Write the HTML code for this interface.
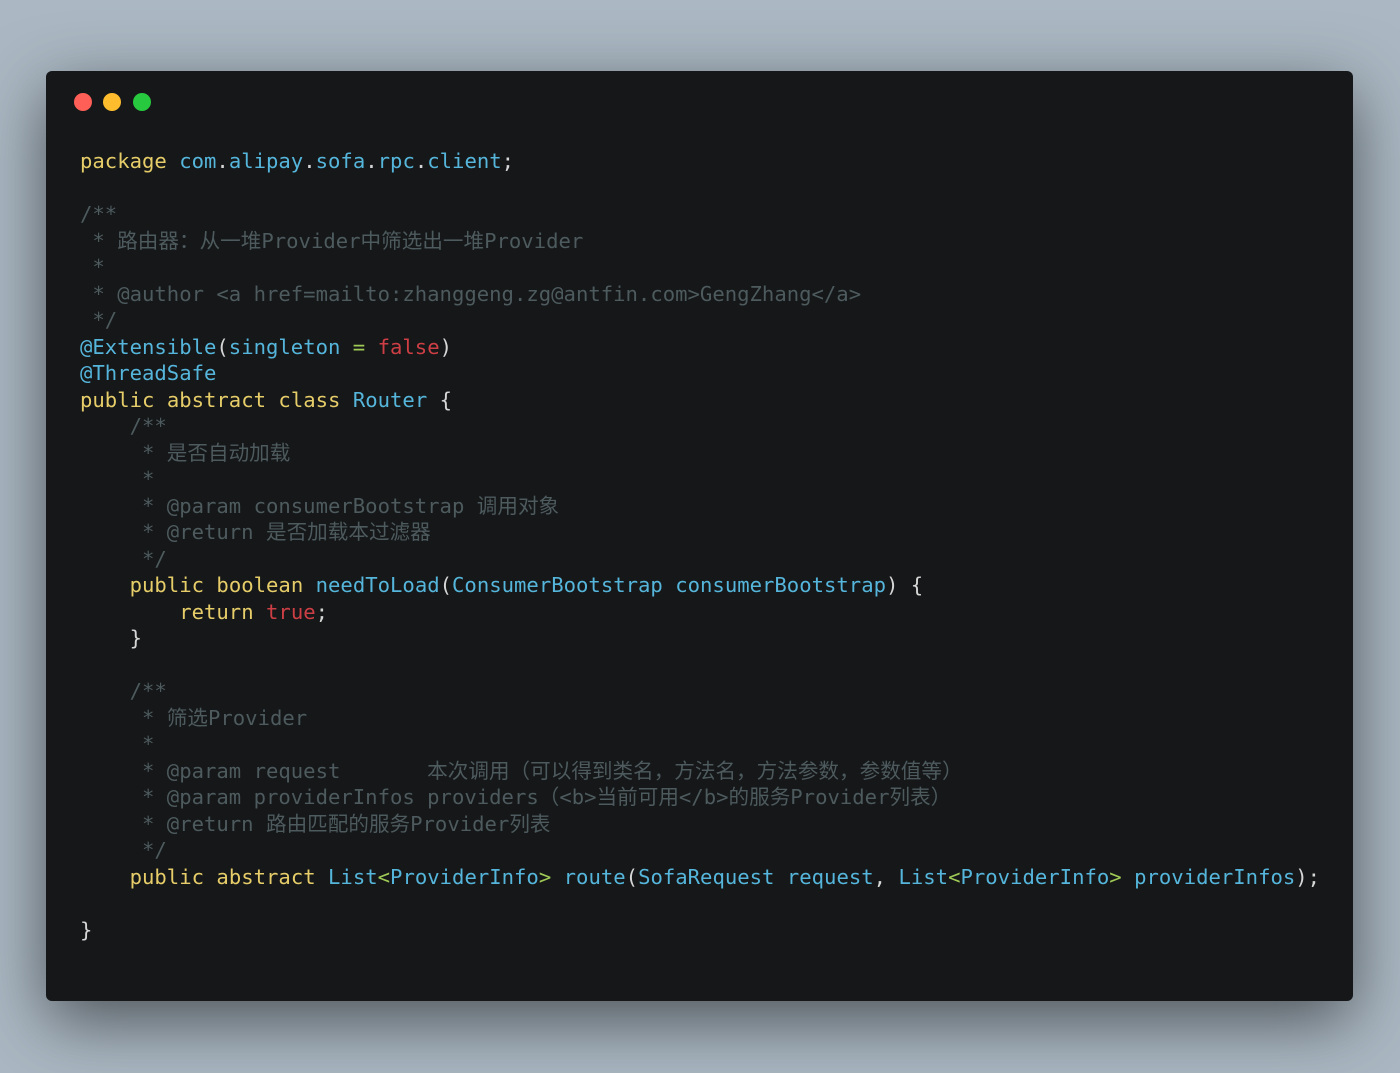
<!DOCTYPE html>
<html><head><meta charset="utf-8"><style>
html,body{margin:0;padding:0;}
body{width:1400px;height:1073px;background:#abb8c3;position:relative;overflow:hidden;}
.win{position:absolute;left:46px;top:71px;width:1307px;height:930px;background:#151718;border-radius:6px;box-shadow:0 20px 68px rgba(0,0,0,0.55);}
.dot{position:absolute;top:22px;width:18px;height:18px;border-radius:50%;}
pre{position:absolute;left:34px;top:77px;margin:0;font-family:"DejaVu Sans Mono","Liberation Mono","Noto Sans CJK SC",monospace;font-size:20.6px;line-height:26.5px;color:#d6d6d6;}
.k{color:#e6cd69}.b{color:#55b5db}.c{color:#4d5a5e}.r{color:#cd3f45}.g{color:#9fca56}
</style></head><body>
<div class="win">
<div class="dot" style="left:28px;background:#ff5f56"></div>
<div class="dot" style="left:57px;background:#ffbd2e"></div>
<div class="dot" style="left:87px;background:#27c93f"></div>
<pre><span class="k">package</span> <span class="b">com</span>.<span class="b">alipay</span>.<span class="b">sofa</span>.<span class="b">rpc</span>.<span class="b">client</span>;

<span class="c">/**
 * 路由器：从一堆Provider中筛选出一堆Provider
 *
 * @author &lt;a href=mailto:zhanggeng.zg@antfin.com&gt;GengZhang&lt;/a&gt;
 */</span>
<span class="b">@Extensible</span>(<span class="b">singleton</span> <span class="g">=</span> <span class="r">false</span>)
<span class="b">@ThreadSafe</span>
<span class="k">public</span> <span class="k">abstract</span> <span class="k">class</span> <span class="b">Router</span> {
    <span class="c">/**
     * 是否自动加载
     *
     * @param consumerBootstrap 调用对象
     * @return 是否加载本过滤器
     */</span>
    <span class="k">public</span> <span class="k">boolean</span> <span class="b">needToLoad</span>(<span class="b">ConsumerBootstrap</span> <span class="b">consumerBootstrap</span>) {
        <span class="k">return</span> <span class="r">true</span>;
    }

    <span class="c">/**
     * 筛选Provider
     *
     * @param request       本次调用（可以得到类名，方法名，方法参数，参数值等）
     * @param providerInfos providers（&lt;b&gt;当前可用&lt;/b&gt;的服务Provider列表）
     * @return 路由匹配的服务Provider列表
     */</span>
    <span class="k">public</span> <span class="k">abstract</span> <span class="b">List</span><span class="g">&lt;</span><span class="b">ProviderInfo</span><span class="g">&gt;</span> <span class="b">route</span>(<span class="b">SofaRequest</span> <span class="b">request</span>, <span class="b">List</span><span class="g">&lt;</span><span class="b">ProviderInfo</span><span class="g">&gt;</span> <span class="b">providerInfos</span>);

}</pre>
</div>
</body></html>
